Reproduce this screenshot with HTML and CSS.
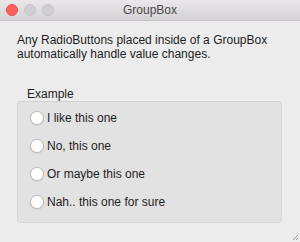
FILE: index.html
```html
<!DOCTYPE html>
<html>
<head>
    <title>GroupBox</title>
    <meta name="viewport" content="width=device-width, initial-scale=1" />
    <link rel="stylesheet" href="styles.css">
</head>
<body>
    <div class="window">
        <div class="titlebar">
            <div class="lights">
                <span class="light close"></span>
                <span class="light"></span>
                <span class="light"></span>
            </div>
            <div class="title">GroupBox</div>
            <div></div>
        </div>

        <div class="content">
            <p class="description">Any RadioButtons placed inside of a GroupBox<br>automatically handle value changes.</p>

            <div class="group-label">Example</div>
            <div class="group-box">
                <label class="radio"><span class="circle"></span>I like this one</label>
                <label class="radio"><span class="circle"></span>No, this one</label>
                <label class="radio"><span class="circle"></span>Or maybe this one</label>
                <label class="radio"><span class="circle"></span>Nah.. this one for sure</label>
            </div>
        </div>

        <svg class="grip" width="6" height="6" viewBox="0 0 6 6">
            <path d="M6 1 L1 6 M6 4 L4 6" stroke="#9a9a9a" stroke-width="1" />
        </svg>
    </div>
</body>
</html>
```

FILE: styles.css
```css
body {
    margin: 0;
    font-family: "Liberation Sans", Arial, sans-serif;
    font-size: 12px;
    color: #1e1e1e;
    background-color: #ececec;
}

.window {
    position: relative;
    width: 300px;
    height: 242px;
    background-color: #ececec;
    overflow: hidden;
}

.titlebar {
    height: 20px;
    display: grid;
    grid-template-columns: 1fr auto 1fr;
    align-items: center;
    background: linear-gradient(#e9e7e9, #d4d2d4);
    border-bottom: 1px solid #c4c2c4;
}

.lights {
    display: flex;
    gap: 6px;
    padding-left: 6px;
}

.light {
    width: 12px;
    height: 12px;
    border-radius: 50%;
    background-color: #d0ced0;
    box-sizing: border-box;
    border: 1px solid #c6c4c6;
}

.light.close {
    background-color: #fc605c;
    border-color: #e9514d;
}

.title {
    font-size: 12px;
    color: #4a4a4a;
}

.content {
    padding: 12px 18px 0 17px;
}

.description {
    margin: 0;
    line-height: 14px;
    white-space: nowrap;
}

.group-label {
    margin: 27px 0 0 10px;
    line-height: 13px;
}

.group-box {
    padding: 2px 0 6px 12px;
    background-color: #e2e2e2;
    border: 1px solid #d8d8d8;
    border-top-color: #d2d2d2;
    border-radius: 4px;
}

.radio {
    height: 28px;
    display: flex;
    align-items: center;
    gap: 3px;
}

.circle {
    width: 14px;
    height: 14px;
    box-sizing: border-box;
    border-radius: 50%;
    background-color: #fff;
    border: 1px solid #bcbcbc;
    box-shadow: 0 0.5px 1px rgba(0, 0, 0, 0.15);
}

.grip {
    position: absolute;
    right: 2px;
    bottom: 2px;
}
```
